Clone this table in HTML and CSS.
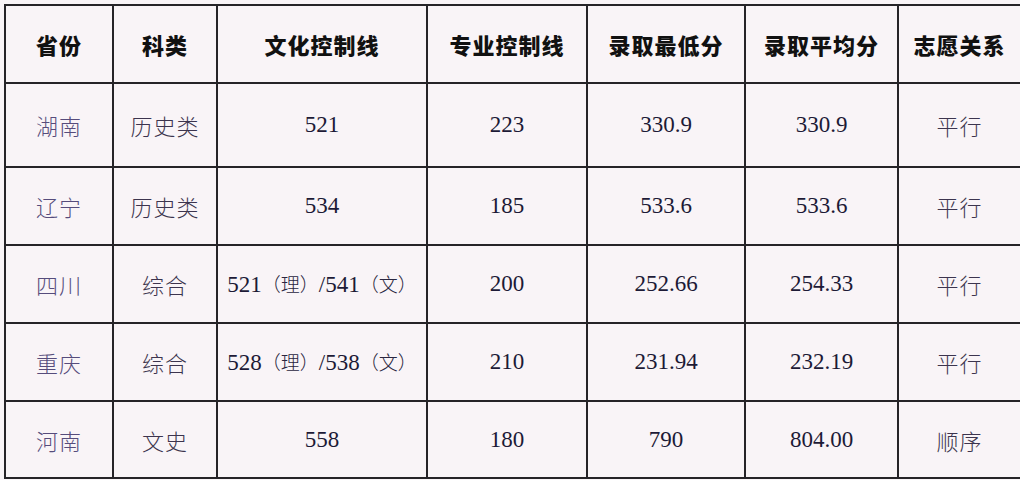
FILE: index.html
```html
<!DOCTYPE html>
<html lang="zh-CN">
<head>
<meta charset="utf-8">
<title>录取分数</title>
<link rel="stylesheet" href="styles.css">
</head>
<body>
<table class="score-table">
  <colgroup>
    <col class="c1"><col class="c2"><col class="c3"><col class="c4"><col class="c5"><col class="c6"><col class="c7">
  </colgroup>
  <thead>
    <tr class="head-row">
      <th>省份</th><th>科类</th><th>文化控制线</th><th>专业控制线</th><th>录取最低分</th><th>录取平均分</th><th class="last">志愿关系</th>
    </tr>
  </thead>
  <tbody>
    <tr class="row-tall">
      <td class="prov">湖南</td><td class="cat">历史类</td><td class="num">521</td><td class="num">223</td><td class="num">330.9</td><td class="num">330.9</td><td class="rel last">平行</td>
    </tr>
    <tr class="row">
      <td class="prov">辽宁</td><td class="cat">历史类</td><td class="num">534</td><td class="num">185</td><td class="num">533.6</td><td class="num">533.6</td><td class="rel last">平行</td>
    </tr>
    <tr class="row">
      <td class="prov">四川</td><td class="cat">综合</td><td class="num">521<span class="cj">（理）</span>/541<span class="cj">（文）</span></td><td class="num">200</td><td class="num">252.66</td><td class="num">254.33</td><td class="rel last">平行</td>
    </tr>
    <tr class="row">
      <td class="prov">重庆</td><td class="cat">综合</td><td class="num">528<span class="cj">（理）</span>/538<span class="cj">（文）</span></td><td class="num">210</td><td class="num">231.94</td><td class="num">232.19</td><td class="rel last">平行</td>
    </tr>
    <tr class="row-last">
      <td class="prov">河南</td><td class="cat">文史</td><td class="num">558</td><td class="num">180</td><td class="num">790</td><td class="num">804.00</td><td class="rel last">顺序</td>
    </tr>
  </tbody>
</table>
</body>
</html>
```

FILE: styles.css
```css
html, body {
  margin: 0;
  padding: 0;
  background: #f9f4f7;
  overflow: hidden;
}

body {
  padding: 4px 0 0 4px;
  width: 1020px;
  height: 480px;
  box-sizing: border-box;
}

.score-table {
  border-collapse: collapse;
  table-layout: fixed;
  width: 1022px;
  background: #f9f4f7;
}

.c1 { width: 108px; }
.c2 { width: 104px; }
.c3 { width: 210px; }
.c4 { width: 160px; }
.c5 { width: 158px; }
.c6 { width: 153px; }
.c7 { width: 127px; }

.score-table th,
.score-table td {
  border: 2px solid #262428;
  padding: 0;
  text-align: center;
  vertical-align: middle;
}

.score-table .last {
  padding-right: 4px;
}

.head-row { height: 78px; }
.row-tall { height: 84px; }
.row { height: 78px; }
.row-last { height: 77px; }

.score-table th {
  font-family: "Noto Sans CJK SC", sans-serif;
  font-weight: 900;
  font-size: 22px;
  color: #111111;
  letter-spacing: 1px;
}

.prov {
  font-family: "Noto Sans CJK SC", sans-serif;
  font-weight: 300;
  font-size: 22px;
  color: #564c7c;
  letter-spacing: 1px;
}

.cat,
.rel {
  font-family: "Noto Sans CJK SC", sans-serif;
  font-weight: 300;
  font-size: 22px;
  color: #3c344e;
  letter-spacing: 1px;
}

.num {
  font-family: "Liberation Serif", serif;
  font-size: 23px;
  color: #1d1a36;
}

.cj {
  font-family: "Noto Sans CJK SC", sans-serif;
  font-weight: 300;
  font-size: 19px;
  color: #2a2640;
}
```
